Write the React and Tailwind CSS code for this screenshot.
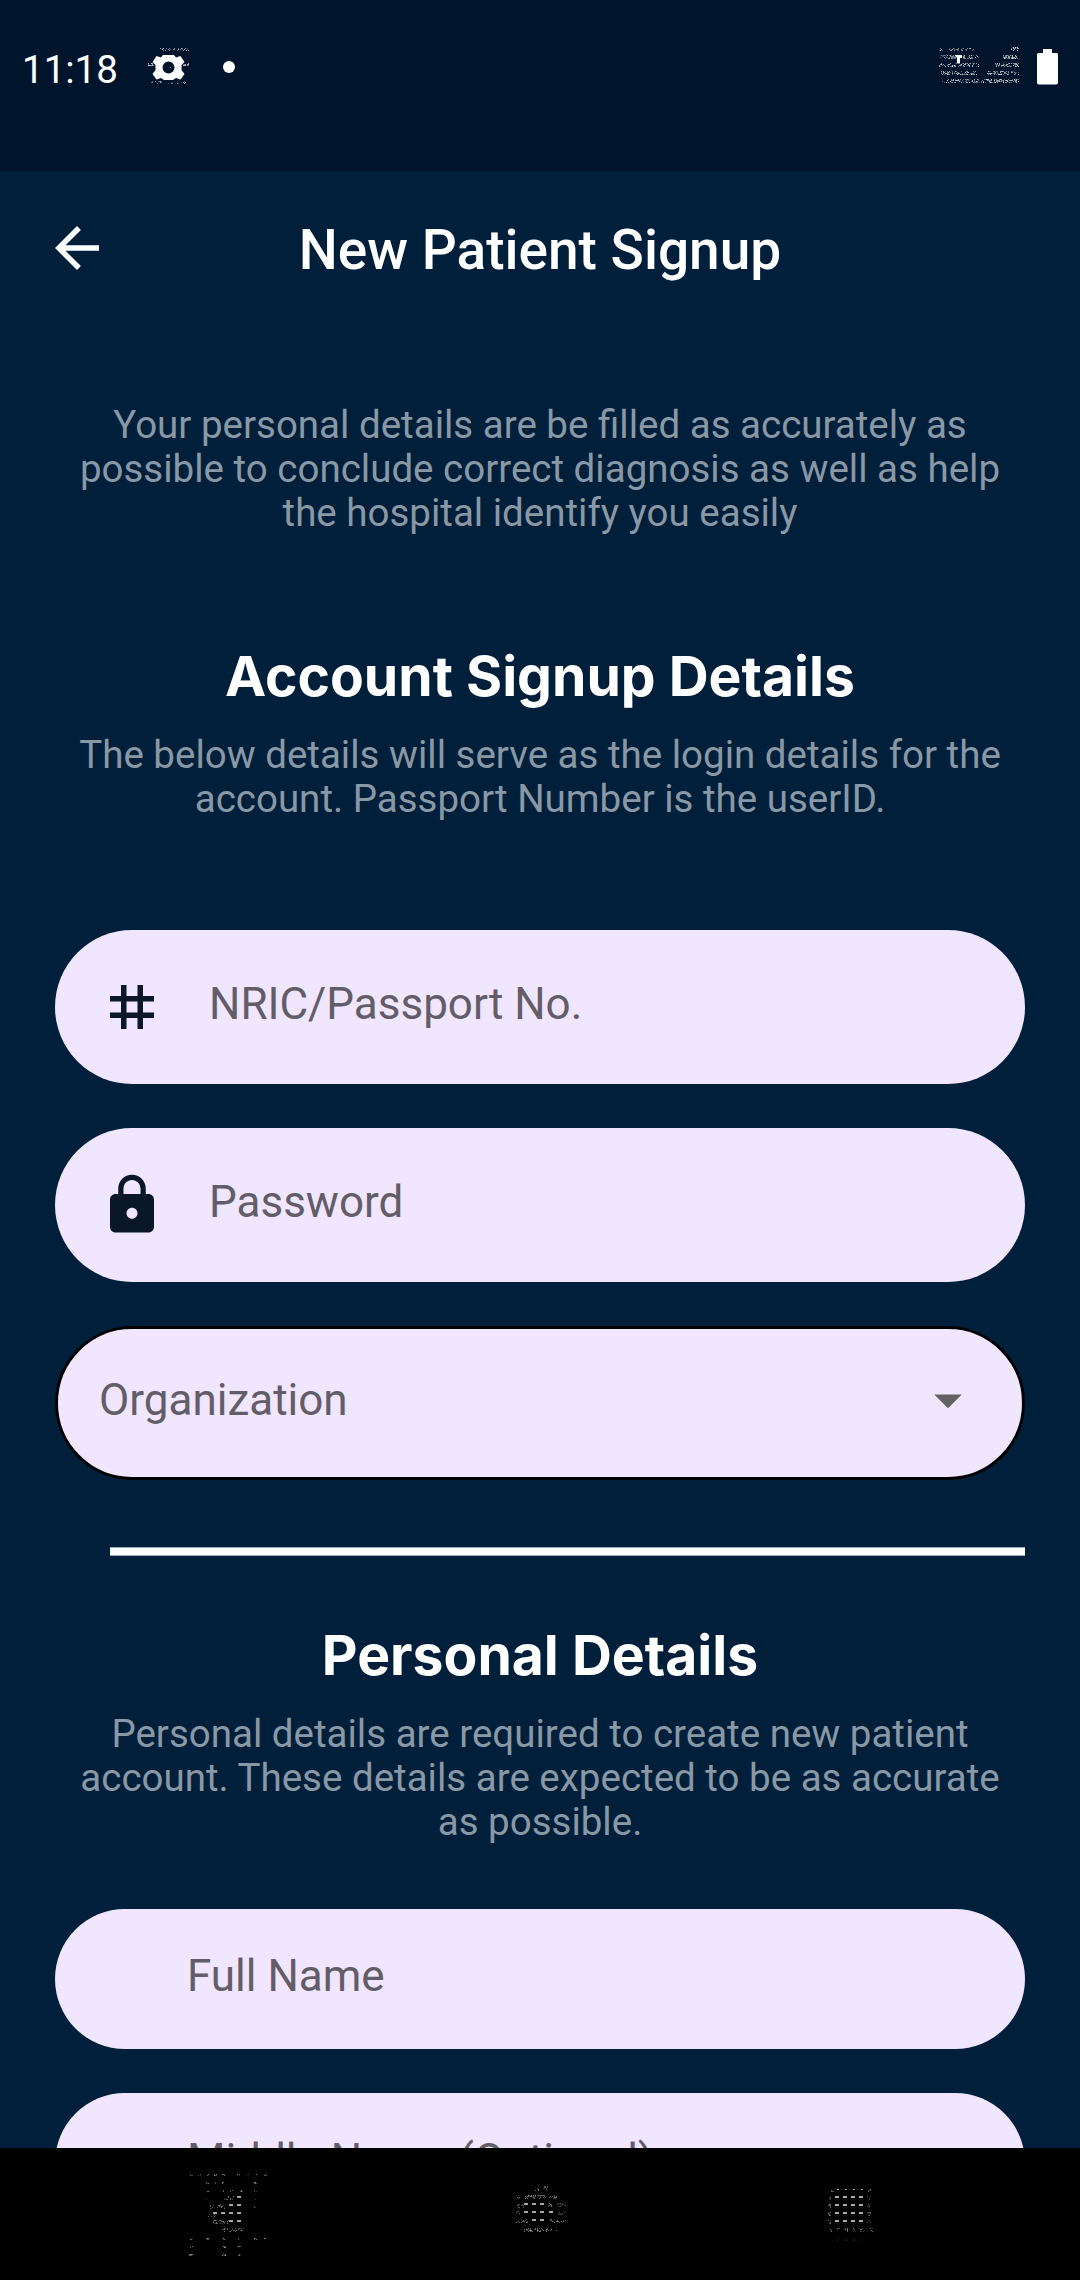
import React from "react";

// Small deterministic noise used for the grainy system glyphs.
function noise(n) {
  const v = Math.sin(n * 12.9898 + 4.137) * 43758.5453;
  return v - Math.floor(v);
}

function Speckle({ spans, color = "#ffffff" }) {
  const dots = [];
  spans.forEach(([x0, x1, y, rows = 3, density = 0.45, alpha = 0.8], s) => {
    for (let r = 0; r < rows; r++) {
      for (let x = x0; x < x1; x++) {
        const n = noise(s * 977 + r * 131 + x * 7 + y);
        if (n < density) {
          dots.push(
            <rect key={`${s}-${r}-${x}`} x={x} y={y + r} width="1" height="1" opacity={alpha * (0.3 + 0.7 * noise(n * 900))} />
          );
        }
      }
    }
  });
  return <g fill={color} shapeRendering="crispEdges">{dots}</g>;
}

function Dashes({ points }) {
  return (
    <g fill="#a6a6a6" shapeRendering="crispEdges">
      {points.map(([x, y]) => (
        <rect key={`${x}-${y}`} x={x} y={y} width="4" height="2" />
      ))}
    </g>
  );
}

function StatusBar() {
  return (
    <div className="flex h-[171px] shrink-0 items-start bg-[#00142b] pt-[45px] pl-[22px] pr-[22px] text-white">
      <span className="mt-[2px] w-[96px] text-[38.5px] leading-[46px] whitespace-nowrap">11:18</span>
      <svg className="ml-[26px] mt-px h-[44px] w-[50px]" viewBox="144 46 50 44" fill="#fff">
        <path
          fillRule="evenodd"
          d="M163 55H174L176 57.500L180.500 56L184.500 62L181.500 65V70L184.500 74L180.500 79.500L176 78L173 80H164L161 78L156.500 79.500L152.500 74L155.500 70V65L152.500 62L156.500 56L161 57.500ZM168.500 61.500a6 6 0 1 0 0 12a6 6 0 1 0 0-12z"
        />
        <Speckle spans={[[159, 189, 48, 3, 0.3], [148, 154, 63, 3, 0.7], [183, 189, 63, 3, 0.7], [151, 186, 81, 3, 0.22, 0.7], [165, 172, 67, 1, 0.4, 0.6]]} />
      </svg>
      <span className="ml-[29px] mt-[16px] size-[12px] rounded-full bg-white" />
      <svg className="ml-auto mt-px h-[40px] w-[84px]" viewBox="937 46 84 40">
        <Speckle
          spans={[
            [940, 943, 48], [948, 959, 48, 3, 0.6, 0.6], [961, 974, 48, 3, 0.4], [1011, 1019, 47, 4, 0.4],
            [939, 957, 55, 4, 0.6, 0.6], [963, 979, 55, 4, 0.5], [1003, 1019, 55, 4, 0.5],
            [939, 979, 63, 4, 0.42], [995, 1019, 63, 4, 0.5],
            [941, 977, 71, 4, 0.5], [987, 1009, 71, 4, 0.5], [1011, 1019, 71, 4, 0.5],
            [941, 989, 79, 4, 0.42], [989, 1019, 79, 4, 0.5],
          ]}
        />
        <path fill="#fff" d="M955 55h7v3h-2v5h-3v-5z" />
      </svg>
      <svg className="ml-[16px] mt-[3px] h-[37px] w-[21px]" viewBox="0 0 21 37" fill="#fff">
        <path d="M6 1h9v4h4.500a1.500 1.500 0 0 1 1.500 1.500v28a2 2 0 0 1-2 2H2a2 2 0 0 1-2-2v-28A1.500 1.500 0 0 1 1.500 5H6z" />
      </svg>
    </div>
  );
}

function Header() {
  return (
    <header className="grid h-[154px] shrink-0 grid-cols-[66px_1fr_66px] items-center px-[44px]">
      <svg className="size-[66px]" viewBox="0 0 24 24" fill="#fff">
        <path d="M20 11H7.830l5.590-5.590L12 4l-8 8 8 8 1.410-1.410L7.830 13H20v-2z" />
      </svg>
      <h1 className="pt-[4px] text-center text-[55px] leading-[64px] font-medium whitespace-nowrap text-white">
        New Patient Signup
      </h1>
    </header>
  );
}

function Heading({ children, className }) {
  return (
    <h2 className={`text-center font-[Inter,sans-serif] text-[55.25px] leading-[66px] font-bold whitespace-nowrap text-white ${className}`}>
      {children}
    </h2>
  );
}

function Note({ lines, className }) {
  return (
    <p className={`text-center text-[38.5px] leading-[44px] whitespace-nowrap text-[#8a98a5] ${className}`}>
      {lines.map((line) => (
        <span key={line} className="block">{line}</span>
      ))}
    </p>
  );
}

function IconField({ label, children }) {
  return (
    <div className="flex h-[154px] items-center rounded-full bg-[#f0e6ff] pl-[44px] text-[#0a1729]">
      {children}
      <span className="ml-[44px] pb-[6px] text-[44px] leading-[52px] text-[#625d67]">{label}</span>
    </div>
  );
}

function PlainField({ label }) {
  return (
    <div className="flex h-[140px] shrink-0 items-center rounded-[70px] bg-[#f0e6ff] pl-[132px]">
      <span className="pb-[6px] text-[44px] leading-[52px] text-[#625d67]">{label}</span>
    </div>
  );
}

function NavBar() {
  const recent = [];
  for (const y of [56, 64, 72, 80]) for (const x of [45, 53, 61, 69]) recent.push([x, y]);
  return (
    <nav className="flex h-[132px] shrink-0 items-start bg-black">
      <svg className="-mt-[8px] ml-[160px] size-[140px]" viewBox="0 0 140 140">
        <Dashes points={[[77, 56], [69, 64], [77, 64], [53, 72], [61, 72], [69, 72], [77, 72], [69, 80], [77, 80]]} />
        <Speckle
          color="#b0b0b0"
          spans={[
            ...[30, 38, 46, 54, 62, 77, 86, 94, 104].map((x) => [x, x + 3, 34, 2, 0.6]),
            ...[46, 54, 62, 94].map((x) => [x, x + 3, 42, 2, 0.6]),
            ...[46, 62, 70, 80, 94].map((x) => [x, x + 3, 50, 2, 0.6]),
            ...[30, 46, 62, 78, 94, 104].map((x) => [x, x + 3, 98, 2, 0.6]),
            ...[29, 62, 77].map((x) => [x, x + 4, 106, 2, 0.5]),
            ...[29, 62, 77].map((x) => [x, x + 4, 114, 2, 0.6]),
            [46, 48, 59, 1], [64, 75, 56, 4, 0.35], [94, 96, 59, 1], [50, 65, 65, 4, 0.35], [94, 96, 66, 2, 0.5, 0.5], [46, 56, 74, 3, 0.3], [53, 69, 80, 4, 0.35], [61, 84, 88, 4, 0.3],
          ]}
        />
      </svg>
      <svg className="-mt-[8px] ml-[180px] size-[140px]" viewBox="0 0 140 140">
        <Dashes points={[[44, 63], [52, 63], [60, 63], [44, 71], [52, 71], [60, 71], [69, 71], [52, 79], [60, 79]]} />
        <Speckle
          color="#b0b0b0"
          spans={[[55, 60, 48, 3, 0.4], [63, 68, 46, 5, 0.3], [36, 40, 55, 4, 0.3], [45, 66, 55, 4, 0.4], [69, 77, 55, 4, 0.4], [36, 44, 64, 4, 0.4, 0.6], [68, 73, 63, 4, 0.4], [77, 86, 63, 4, 0.4, 0.5], [36, 40, 71, 4, 0.5, 0.6], [78, 86, 71, 4, 0.4, 0.5], [36, 48, 79, 4, 0.4], [69, 86, 79, 4, 0.35], [44, 73, 88, 4, 0.4], [76, 78, 90, 2, 0.4]]}
        />
      </svg>
      <svg className="-mt-[8px] ml-[170px] size-[140px]" viewBox="0 0 140 140">
        <Dashes points={recent} />
        <g fill="#a6a6a6">
          {[47, 55, 63, 71].map((x) => <rect key={x} x={x} y="49" width="2" height="1" />)}
        </g>
        <Speckle
          color="#b0b0b0"
          spans={[
            [40, 45, 50, 2, 0.5], [78, 81, 49, 3, 0.6],
            ...[56, 64, 72, 80].map((y) => [38, 41, y, 4, 0.5]),
            ...[56, 64, 72, 80].map((y) => [77, 81, y, 4, 0.45, 0.6]),
            ...[40, 46, 54, 62, 70, 80].map((x) => [x, x + 4, 88, 4, 0.4]),
            ...[47, 55, 63, 71].map((x) => [x, x + 2, 99, 2, 0.5, 0.25]),
          ]}
        />
      </svg>
    </nav>
  );
}

export default function App() {
  return (
    <div className="flex h-[2280px] w-[1080px] flex-col overflow-hidden bg-[#001f3a] font-[Roboto,sans-serif]">
      <StatusBar />
      <Header />
      <main className="flex min-h-0 flex-1 flex-col overflow-hidden px-[55px]">
        <Note
          className="mt-[78px]"
          lines={[
            "Your personal details are be filled as accurately as",
            "possible to conclude correct diagnosis as well as help",
            "the hospital identify you easily",
          ]}
        />
        <Heading className="mt-[108px]">Account Signup Details</Heading>
        <Note
          className="mt-[24px]"
          lines={[
            "The below details will serve as the login details for the",
            "account. Passport Number is the userID.",
          ]}
        />
        <div className="mt-[109px] flex flex-col gap-[44px]">
          <IconField label="NRIC/Passport No.">
            <svg className="size-[66px]" viewBox="0 0 24 24" fill="currentColor">
              <path d="M20 10V8h-4V4h-2v4h-4V4H8v4H4v2h4v4H4v2h4v4h2v-4h4v4h2v-4h4v-2h-4v-4h4zm-6 4h-4v-4h4v4z" />
            </svg>
          </IconField>
          <IconField label="Password">
            <svg className="size-[66px]" viewBox="0 0 24 24" fill="currentColor">
              <path d="M18 8h-1V6c0-2.760-2.240-5-5-5S7 3.240 7 6v2H6c-1.100 0-2 .9-2 2v10c0 1.100.9 2 2 2h12c1.100 0 2-.9 2-2V10c0-1.100-.9-2-2-2zm-6 9c-1.100 0-2-.9-2-2s.9-2 2-2 2 .9 2 2-.9 2-2 2zm3.100-9H8.900V6c0-1.710 1.390-3.100 3.100-3.100 1.710 0 3.100 1.390 3.100 3.100v2z" />
            </svg>
          </IconField>
          <div className="flex h-[154px] items-center justify-between rounded-full border-3 border-black bg-[#f0e6ff] pr-[41px] pl-[41px]">
            <span className="pb-[6px] text-[44px] leading-[52px] text-[#625d67]">Organization</span>
            <svg className="mb-[7px] size-[66px]" viewBox="0 0 24 24" fill="#616161">
              <path d="M7 10l5 5 5-5z" />
            </svg>
          </div>
        </div>
        <div className="mt-[67px] ml-[55px] h-[9px] shrink-0 border-y border-[#9dabb8] bg-white" />
        <Heading className="mt-[66px]">Personal Details</Heading>
        <Note
          className="mt-[24px]"
          lines={[
            "Personal details are required to create new patient",
            "account. These details are expected to be as accurate",
            "as possible.",
          ]}
        />
        <div className="mt-[65px] flex flex-col gap-[44px]">
          <PlainField label="Full Name" />
          <PlainField label="Middle Name (Optional)" />
        </div>
      </main>
      <NavBar />
    </div>
  );
}
